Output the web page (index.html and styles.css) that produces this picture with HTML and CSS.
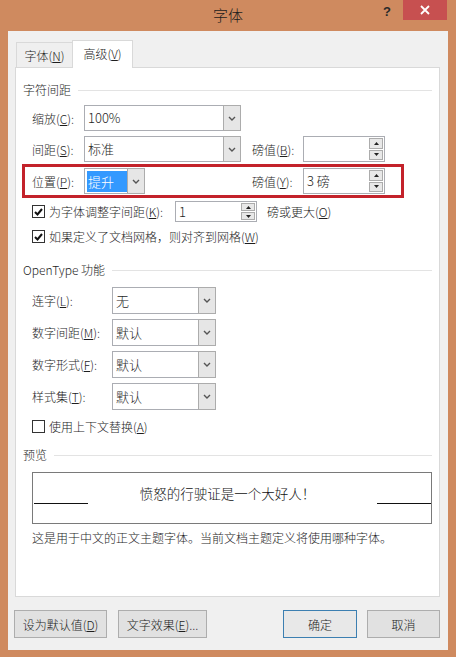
FILE: index.html
```html
<!DOCTYPE html>
<html lang="zh-CN">
<head>
<meta charset="utf-8">
<title>字体</title>
<link rel="stylesheet" href="styles.css">
</head>
<body>
<div class="window">
  <div class="titlebar">
    <div class="title">字体</div>
    <div class="caption-btns">
      <div class="help">?</div>
      <div class="close"><svg width="10" height="10" viewBox="0 0 10 10"><path d="M1 1L9 9M9 1L1 9" stroke="#fff" stroke-width="1.8"/></svg></div>
    </div>
  </div>
  <div class="client">
    <div class="tabs">
      <div class="tab">字体(<u>N</u>)</div>
      <div class="tab active">高级(<u>V</u>)</div>
    </div>
    <div class="panel">
      <div class="sec-head h1"><span>字符间距</span><i></i></div>

      <div class="grid-row r1">
        <label>缩放(<u>C</u>):</label>
        <div class="select"><span class="val">100%</span><span class="arrow"><svg width="8" height="5" viewBox="0 0 8 5"><path d="M1 1L4 4L7 1" fill="none" stroke="#555" stroke-width="1.4"/></svg></span></div>
      </div>

      <div class="grid-row r2">
        <label>间距(<u>S</u>):</label>
        <div class="select"><span class="val">标准</span><span class="arrow"><svg width="8" height="5" viewBox="0 0 8 5"><path d="M1 1L4 4L7 1" fill="none" stroke="#555" stroke-width="1.4"/></svg></span></div>
        <span></span>
        <label>磅值(<u>B</u>):</label>
        <div class="spin"><span class="val"></span><span class="spin-btns"><span class="sb"><svg width="5" height="3" viewBox="0 0 5 3"><path d="M0 3L2.5 0L5 3Z" fill="#222"/></svg></span><span class="sb"><svg width="5" height="3" viewBox="0 0 5 3"><path d="M0 0L2.5 3L5 0Z" fill="#222"/></svg></span></span></div>
      </div>

      <div class="red-box">
        <div class="grid-row">
          <label>位置(<u>P</u>):</label>
          <div class="select short"><span class="val"><span class="hl">提升</span></span><span class="arrow"><svg width="8" height="5" viewBox="0 0 8 5"><path d="M1 1L4 4L7 1" fill="none" stroke="#555" stroke-width="1.4"/></svg></span></div>
          <span></span>
          <label>磅值(<u>Y</u>):</label>
          <div class="spin"><span class="val">3 磅</span><span class="spin-btns"><span class="sb"><svg width="5" height="3" viewBox="0 0 5 3"><path d="M0 3L2.5 0L5 3Z" fill="#222"/></svg></span><span class="sb"><svg width="5" height="3" viewBox="0 0 5 3"><path d="M0 0L2.5 3L5 0Z" fill="#222"/></svg></span></span></div>
        </div>
      </div>

      <div class="cb-row c1">
        <span class="cb"><svg width="9" height="8" viewBox="0 0 9 8"><path d="M1 4L3.5 6.5L8 1" fill="none" stroke="#111" stroke-width="2"/></svg></span>
        <span class="cb-text">为字体调整字间距(<u>K</u>):</span>
        <div class="spin small"><span class="val">1</span><span class="spin-btns"><span class="sb"><svg width="5" height="3" viewBox="0 0 5 3"><path d="M0 3L2.5 0L5 3Z" fill="#222"/></svg></span><span class="sb"><svg width="5" height="3" viewBox="0 0 5 3"><path d="M0 0L2.5 3L5 0Z" fill="#222"/></svg></span></span></div>
        <span class="after">磅或更大(<u>O</u>)</span>
      </div>

      <div class="cb-row c2">
        <span class="cb"><svg width="9" height="8" viewBox="0 0 9 8"><path d="M1 4L3.5 6.5L8 1" fill="none" stroke="#111" stroke-width="2"/></svg></span>
        <span class="cb-text">如果定义了文档网格，则对齐到网格(<u>W</u>)</span>
      </div>

      <div class="sec-head h2"><span>OpenType 功能</span><i></i></div>

      <div class="ot-row first">
        <label>连字(<u>L</u>):</label>
        <div class="select"><span class="val">无</span><span class="arrow"><svg width="8" height="5" viewBox="0 0 8 5"><path d="M1 1L4 4L7 1" fill="none" stroke="#555" stroke-width="1.4"/></svg></span></div>
      </div>
      <div class="ot-row">
        <label>数字间距(<u>M</u>):</label>
        <div class="select"><span class="val">默认</span><span class="arrow"><svg width="8" height="5" viewBox="0 0 8 5"><path d="M1 1L4 4L7 1" fill="none" stroke="#555" stroke-width="1.4"/></svg></span></div>
      </div>
      <div class="ot-row">
        <label>数字形式(<u>F</u>):</label>
        <div class="select"><span class="val">默认</span><span class="arrow"><svg width="8" height="5" viewBox="0 0 8 5"><path d="M1 1L4 4L7 1" fill="none" stroke="#555" stroke-width="1.4"/></svg></span></div>
      </div>
      <div class="ot-row">
        <label>样式集(<u>T</u>):</label>
        <div class="select"><span class="val">默认</span><span class="arrow"><svg width="8" height="5" viewBox="0 0 8 5"><path d="M1 1L4 4L7 1" fill="none" stroke="#555" stroke-width="1.4"/></svg></span></div>
      </div>

      <div class="cb-row c3">
        <span class="cb"></span>
        <span class="cb-text">使用上下文替换(<u>A</u>)</span>
      </div>

      <div class="sec-head h3"><span>预览</span><i></i></div>

      <div class="preview">
        <span class="uline"></span>
        <span class="ptext">愤怒的行驶证是一个大好人！</span>
        <span class="uline"></span>
      </div>
      <div class="desc">这是用于中文的正文主题字体。当前文档主题定义将使用哪种字体。</div>
    </div>

    <div class="buttons">
      <div class="btn b1">设为默认值(<u>D</u>)</div>
      <div class="btn b2">文字效果(<u>E</u>)...</div>
      <div class="btn ok">确定</div>
      <div class="btn cancel">取消</div>
    </div>
  </div>
</div>
</body>
</html>
```
FILE: styles.css
```css
* { box-sizing: border-box; margin: 0; padding: 0; }
html, body { width: 456px; height: 657px; overflow: hidden; }
body {
  font-family: "Noto Sans CJK SC", "Microsoft YaHei", sans-serif;
  font-size: 12px;
  font-weight: 300;
  color: #1e1e1e;
  background: #CF8A5F;
}
u { text-decoration: underline; text-underline-offset: 1px; }

.window { width: 456px; height: 657px; background: #CF8A5F; display: flex; flex-direction: column; }

.titlebar { height: 31px; display: grid; grid-template-columns: 1fr auto 1fr; align-items: start; }
.title { grid-column: 2; font-size: 15px; line-height: 30px; color: #1c1c1c; }
.caption-btns { grid-column: 3; justify-self: end; display: flex; align-items: flex-start; }
.help { font-family: "Liberation Sans", sans-serif; font-weight: bold; font-size: 13px; line-height: 24px; margin-right: 12px; color: #2a2a2a; }
.close { width: 44px; height: 20px; background: #C75050; margin-right: 9px; display: flex; align-items: center; justify-content: center; }

.client { margin: 0 8px; height: 619px; background: #F0F0F0; padding-top: 9px; }

.tabs { display: flex; align-items: flex-end; padding-left: 8px; height: 28px; margin-bottom: -1px; }
.tab {
  width: 56px; height: 25px; margin-bottom: 1px;
  border: 1px solid #D9D9D9; border-bottom: none; border-right: none;
  background: #EFEFEF;
  display: flex; align-items: center; justify-content: center;
  font-size: 12px; color: #1e1e1e;
}
.tab.active {
  width: 61px; height: 28px; margin-bottom: 0;
  border-right: 1px solid #D9D9D9;
  background: #fff; position: relative; z-index: 1;
  padding-bottom: 2px;
}

.panel {
  margin-left: 7px; width: 425px; height: 530px;
  background: #fff; border: 1px solid #D9D9D9;
  padding: 0 7px;
}

.sec-head { display: flex; align-items: center; height: 16px; gap: 7px; }
.sec-head span { line-height: 16px; }
.sec-head i { flex: 1; height: 1px; background: #E3E3E3; }
.h1 { margin-top: 14px; }
.h2 { margin-top: 15px; }
.h3 { margin-top: 10px; }

.grid-row {
  display: grid;
  grid-template-columns: 52px 157px 11px 51px 82px;
  align-items: center; height: 26px; padding-left: 9px;
}
.r1 { margin-top: 7px; }
.r2 { margin-top: 5px; }
label { white-space: nowrap; }

.select {
  display: flex; height: 26px; border: 1px solid #ABADB3; background: #fff;
}
.select .val { flex: 1; padding-left: 3px; line-height: 24px; font-size: 13px; display: flex; align-items: center; }
.select .arrow {
  width: 18px; margin: -1px -1px -1px 0;
  background: #E6E6E6; border: 1px solid #ACACAC;
  display: flex; align-items: center; justify-content: center;
}
.select.short { width: 61px; }
.hl { background: #3399FF; color: #fff; width: 40px; height: 21px; line-height: 21px; padding-left: 1px; margin-left: -1px; font-size: 13px; }

.spin {
  display: flex; height: 26px; border: 1px solid #ABADB3; background: #fff; padding: 1px;
}
.spin .val { flex: 1; padding-left: 2px; line-height: 22px; font-size: 13px; }
.spin-btns { width: 14px; display: flex; flex-direction: column; gap: 1px; }
.sb {
  flex: 1; background: #E8E8E8; border: 1px solid #ACACAC;
  display: flex; align-items: center; justify-content: center;
}
.spin.small { width: 82px; height: 21px; margin-left: 12px; }
.spin.small .val { line-height: 17px; }

.red-box {
  margin-top: 2px; margin-left: -1px; width: 382px; height: 34px;
  border: 3px solid #C3222A; padding-top: 1px;
}
.red-box .grid-row { padding-left: 7px; }

.cb-row { display: flex; align-items: center; height: 21px; padding-left: 9px; }
.c1 { margin-top: 3px; }
.c2 { margin-top: 4px; }
.c3 { margin-top: 6px; }
.cb {
  width: 13px; height: 13px; border: 1px solid #333; background: #fff;
  display: flex; align-items: center; justify-content: center; margin-right: 4px;
}
.after { margin-left: 10px; }

.ot-row {
  display: grid; grid-template-columns: 80px 104px;
  align-items: center; height: 27px; padding-left: 9px; margin-top: 5px;
}
.ot-row.first { margin-top: 9px; }
.ot-row .select { height: 27px; }
.ot-row .select .val { line-height: 25px; }

.preview {
  margin-top: 9px; margin-left: 9px; width: 400px; height: 52px;
  border: 1px solid #7A7A7A;
  display: grid; grid-template-columns: 54px 1fr 54px;
  padding: 0 0 0 1px;
}
.uline { height: 31px; border-bottom: 1px solid #111; }
.ptext { text-align: center; font-size: 13.5px; line-height: 20px; padding-top: 10px; padding-right: 10px; color: #111; }

.desc { margin-top: 6px; padding-left: 9px; line-height: 16px; }

.buttons { display: flex; margin-top: 13px; padding: 0 8px 0 6px; }
.btn {
  height: 28px; border: 1px solid #ADADAD; background: #E1E1E1;
  display: flex; align-items: center; justify-content: center; font-size: 12px;
}
.b1 { width: 93px; }
.b2 { width: 89px; margin-left: 11px; }
.ok { width: 74px; margin-left: auto; border-color: #3C7FB1; background: #E8E8E8; }
.cancel { width: 73px; margin-left: 10px; }
```
